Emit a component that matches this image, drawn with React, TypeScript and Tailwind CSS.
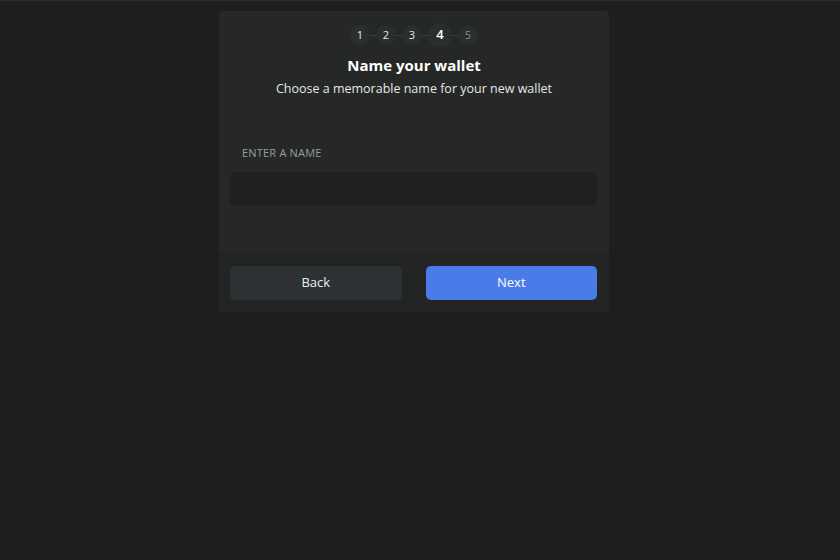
import React from "react";

const font = { fontFamily: '"Open Sans", "Noto Sans", sans-serif' };

function Step({ n, active, dim }: { n: number; active?: boolean; dim?: boolean }) {
  return (
    <div
      className={
        "flex items-center justify-center rounded-full bg-[#2b2e2f] " +
        (active ? "h-[24px] w-[24px] text-[13px] font-semibold text-white" : "h-[20px] w-[20px] text-[11px] ") +
        (dim ? "text-[#8a8d8e]" : active ? "" : "text-[#e8e9e9]")
      }
    >
      {n}
    </div>
  );
}

function Line() {
  return <div className="h-px w-[6px] bg-[#3a3d3e]" />;
}

export default function App() {
  return (
    <div className="min-h-[560px] w-full border-t border-[#2a2d2c] bg-[#1c1f1e]" style={font}>
      <div className="pl-[219px] pt-[10px]">
        <div className="w-[390px] overflow-hidden rounded-[4px] bg-[#252827]">
          <div className="flex flex-col items-center pt-[12px]">
            <div className="flex items-center">
              <Step n={1} />
              <Line />
              <Step n={2} />
              <Line />
              <Step n={3} />
              <Line />
              <Step n={4} active />
              <Line />
              <Step n={5} dim />
            </div>
            <div className="mt-[8px] text-[15px] font-bold leading-[20px] text-white">Name your wallet</div>
            <div className="mt-[5px] text-[12.5px] leading-[18px] text-[#e6e7e7]">
              Choose a memorable name for your new wallet
            </div>
          </div>
          <div className="px-[11px] pb-[46px] pt-[48px]">
            <div className="pl-[12px] text-[11px] uppercase leading-[14px] tracking-[0.2px] text-[#9a9d9c]">Enter a name</div>
            <input className="mt-[12px] h-[34px] w-[367px] rounded-[5px] bg-[#1e2120] px-3 text-[13px] text-white outline-none" />
          </div>
          <div className="flex gap-[24px] border-t border-[#1f2221] bg-[#222524] pb-[12px] pl-[11px] pr-[12px] pt-[13px]">
            <button className="h-[34px] flex-1 rounded-[5px] bg-[#2e3133] text-[13px] text-[#ececec]">Back</button>
            <button className="h-[34px] flex-1 rounded-[5px] bg-[#4a7ce9] text-[13px] text-white">Next</button>
          </div>
        </div>
      </div>
    </div>
  );
}
